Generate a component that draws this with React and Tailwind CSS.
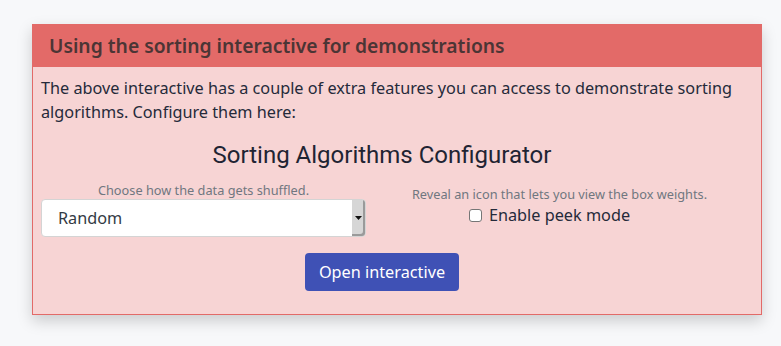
export default function App() {
  return (
    <div className="min-h-[346px] bg-[#f7f8fa] pt-[24px] pl-[32px]" style={{ fontFamily: '"Noto Sans", sans-serif' }}>
      <div className="w-[730px] border border-[#e26a68] bg-[#f7d4d4] shadow-[0_6px_14px_rgba(0,0,0,0.18)]">
        <div className="flex h-[42px] items-center bg-[#e36a68] px-[16px]">
          <h2 className="text-[19.3px] font-semibold text-[#4b3535]">Using the sorting interactive for demonstrations</h2>
        </div>
        <div className="px-[8px] pt-[9px] pb-[23px]">
          <p className="text-[16.25px] leading-[24px] text-[#252a3a]">
            The above interactive has a couple of extra features you can access to demonstrate sorting algorithms. Configure them here:
          </p>
          <h3 className="mt-[17px] pr-[30px] text-center text-[24px] leading-[28px] text-[#1f2433]" style={{ fontFamily: "Roboto, sans-serif" }}>
            Sorting Algorithms Configurator
          </h3>
          <div className="mt-[12px] flex">
            <div className="w-[325px]">
              <p className="text-center text-[12.75px] leading-[18px] text-[#707780]">Choose how the data gets shuffled.</p>
              <div className="flex h-[38px] items-stretch rounded-[4px] border border-[#d4d4d4] bg-white">
                <span className="flex flex-1 items-center pl-[16px] text-[16.25px] text-[#333a44]">Random</span>
                <span className="flex w-[13px] items-center justify-center rounded-r-[3px] bg-[#d6d6d6] shadow-[inset_-2px_-2px_0_#9a9a9a]">
                  <svg width="7" height="4" viewBox="0 0 7 4"><path d="M0 0h7L3.5 4z" fill="#111" /></svg>
                </span>
              </div>
            </div>
            <div className="flex-1 pt-[4px] text-center">
              <p className="text-[12.75px] leading-[18px] text-[#707780]">Reveal an icon that lets you view the box weights.</p>
              <label className="mr-[20px] inline-flex h-[24px] items-center gap-[7px] text-[16.25px] text-[#252a3a]">
                <span className="inline-block h-[13px] w-[13px] rounded-[3px] border border-[#767676] bg-white" />
                Enable peek mode
              </label>
            </div>
          </div>
          <div className="mt-[16px] flex justify-center pr-[30px]">
            <button className="h-[38px] rounded-[4px] bg-[#3f51b5] px-[14px] text-[16.25px] text-white">Open interactive</button>
          </div>
        </div>
      </div>
    </div>
  );
}
